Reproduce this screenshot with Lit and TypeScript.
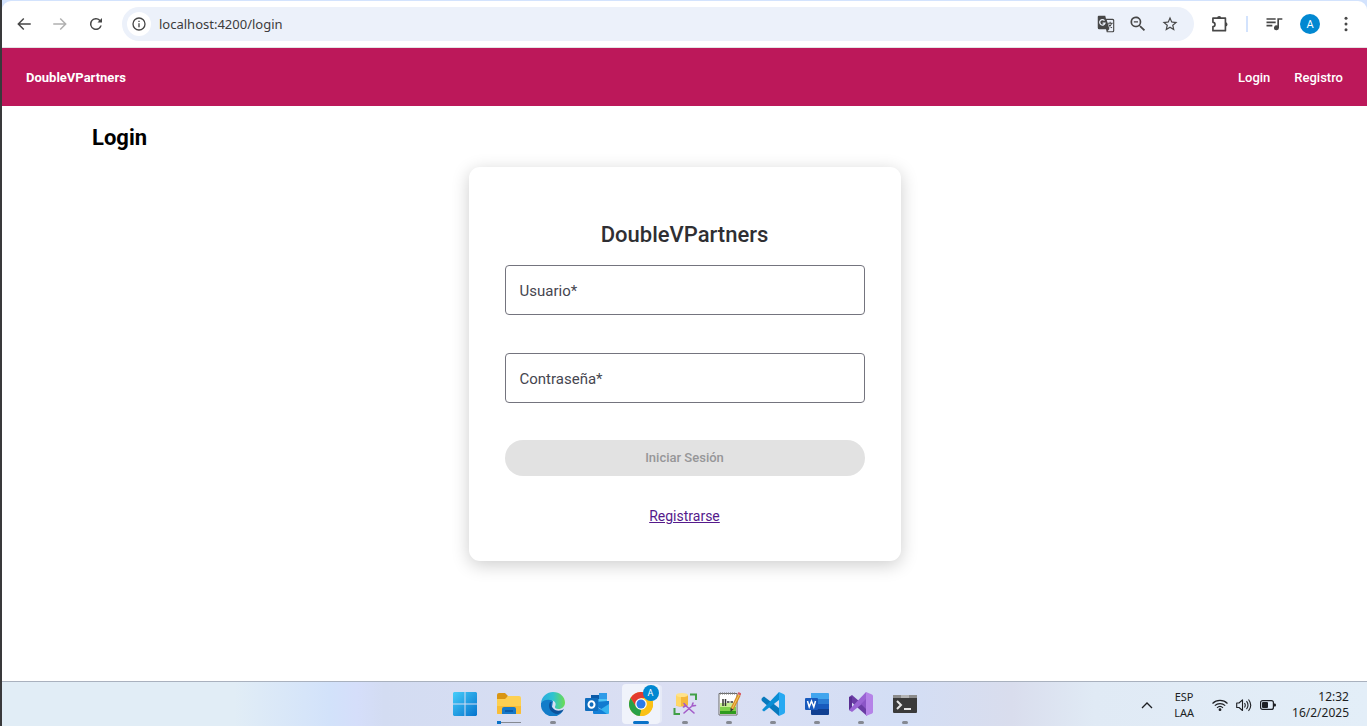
import { LitElement, html, css, svg } from "lit";
import { customElement, state } from "lit/decorators.js";

const icon = (size: number, content: unknown, box = 24) =>
  html`<svg class="icon" aria-hidden="true" width=${size} height=${size} viewBox="0 0 ${box} ${box}">${content}</svg>`;

const resets = css`
  :host, * { box-sizing: border-box; }
  button { border: 0; padding: 0; background: none; color: inherit; font: inherit; }
  svg { display: block; flex: none; }
`;

@customElement("browser-toolbar")
class BrowserToolbar extends LitElement {
  static styles = [resets, css`
    :host { display: block; background: #d3e3fd; padding-top: 1px; font-family: "Open Sans", "Noto Sans", sans-serif; color: #474747; }
    .bar { display: flex; align-items: center; height: 47px; background: #fff; border-bottom: 1px solid #e3e3e3; border-radius: 9px 9px 0 0; padding: 0 11px 0 12px; }
    .nav { display: flex; gap: 16px; padding-right: 16px; }
    .tool { display: grid; place-items: center; width: 20px; height: 24px; }
    .dim { color: #b0b0b0; }
    .omni { flex: 1; display: flex; align-items: center; height: 34px; border-radius: 17px; background: #ecf1fa; padding: 0 14px 0 5px; }
    .info { display: grid; place-items: center; width: 24px; height: 24px; border-radius: 50%; background: #fff; }
    .url { flex: 1; min-width: 0; border: 0; outline: 0; background: none; padding: 0 8px; font: 13px "Noto Sans", sans-serif; color: #3c3c3c; }
    .actions { display: flex; gap: 12px; }
    .right { display: flex; align-items: center; gap: 16px; padding-left: 16px; }
    .rule { width: 2px; height: 16px; background: #d3e3fd; }
    .avatar { display: grid; place-items: center; width: 20px; height: 20px; border-radius: 50%; background: #0288d1; color: #fff; font: 11px Roboto, sans-serif; }
  `];

  render() {
    return html`
      <div class="bar">
        <div class="nav">
          <button class="tool" aria-label="Atrás">${icon(18, svg`<path fill="currentColor" d="M21 11H6.8l5.600-5.600L11 4l-8 8 8 8 1.400-1.400L6.800 13H21z"/>`)}</button>
          <button class="tool dim" aria-label="Adelante">${icon(18, svg`<path fill="currentColor" d="M3 11h14.200l-5.600-5.600L13 4l8 8-8 8-1.400-1.400 5.600-5.600H3z"/>`)}</button>
          <button class="tool" aria-label="Recargar">${icon(18, svg`<path fill="currentColor" d="M17.650 6.350A8 8 0 1 0 19.730 14h-2.080A6 6 0 1 1 12 6c1.660 0 3.140.69 4.220 1.780L14 10h6V4z"/>`)}</button>
        </div>
        <div class="omni">
          <span class="info">${icon(16, svg`<path fill="currentColor" d="M11 7h2v2h-2zm0 4h2v6h-2zm1-9a10 10 0 1 0 0 20 10 10 0 0 0 0-20m0 18a8 8 0 1 1 0-16 8 8 0 0 1 0 16"/>`)}</span>
          <input class="url" aria-label="Dirección" value="localhost:4200/login" />
          <div class="actions">
            <button class="tool" aria-label="Traducir">${icon(18, svg`<path fill="currentColor" fill-rule="evenodd" d="M2 1h9l1 4h9a2 2 0 0 1 2 2v14a2 2 0 0 1-2 2h-8l-1-4H3a2 2 0 0 1-2-2V3a2 2 0 0 1 1-2m11 5.500 3.500 12L14 21.500h6.500a1 1 0 0 0 1-1v-13a1 1 0 0 0-1-1z"/><path fill="none" stroke="#ecf1fa" stroke-width="1.700" d="M10 7.500a3.600 3.600 0 1 0 .7 3.300H7.500"/><path fill="none" stroke="currentColor" stroke-width="1.400" d="M14 11h7m-3.500-2v2m2 0c-.6 2.500-2.500 4.500-4 5.500m0-4c1 2 2.500 3.500 4.500 4.500"/>`)}</button>
            <button class="tool" aria-label="Zoom">${icon(20, svg`<path fill="currentColor" d="M15.500 14h-.8l-.3-.3a6.500 6.500 0 1 0-.7.7l.3.300v.8l5 5 1.500-1.500zm-6 0a4.500 4.500 0 1 1 0-9 4.500 4.500 0 0 1 0 9M7 8.700h5v1.600H7z"/>`)}</button>
            <button class="tool" aria-label="Favoritos">${icon(18, svg`<path fill="currentColor" d="m22 9.240-7.190-.62L12 2 9.190 8.630 2 9.240l5.460 4.730L5.820 21 12 17.270 18.180 21l-1.630-7.030zM12 15.400l-3.760 2.270 1-4.280-3.320-2.880 4.380-.38L12 6.100l1.710 4.040 4.380.38-3.320 2.880 1 4.280z"/>`)}</button>
          </div>
        </div>
        <div class="right">
          <button class="tool" aria-label="Extensiones">${icon(20, svg`<path fill="none" stroke="currentColor" stroke-width="2" stroke-linejoin="round" d="M3.500 5h15v15h-15v-5a2.500 2.500 0 0 0 0-5z"/><path fill="currentColor" d="M8.500 5a2.500 2.500 0 0 1 5 0zM18.500 10a2.500 2.500 0 0 1 0 5z"/>`)}</button>
          <span class="rule"></span>
          <button class="tool" aria-label="Multimedia">${icon(20, svg`<path fill="currentColor" d="M3 5h11v2H3zm0 4h11v2H3zm0 4h7v2H3zm13-8h6v2h-4v9.500a3 3 0 1 1-2-2.800z"/>`)}</button>
          <button class="avatar" aria-label="Perfil">A</button>
          <button class="tool" aria-label="Menú">${icon(20, svg`<circle cx="12" cy="5" r="1.800" fill="currentColor"/><circle cx="12" cy="12" r="1.800" fill="currentColor"/><circle cx="12" cy="19" r="1.800" fill="currentColor"/>`)}</button>
        </div>
      </div>`;
  }
}

@customElement("login-page")
class LoginPage extends LitElement {
  @state() private user = "";
  @state() private pass = "";

  static styles = [resets, css`
    :host { display: block; font-family: Roboto, sans-serif; background: #fff; }
    .header { display: flex; align-items: center; justify-content: space-between; height: 58px; padding: 0 24px; background: #bc185a; color: #fff; font-size: 13px; }
    .brand { font-weight: 700; color: #fff; text-decoration: none; }
    .links { display: flex; gap: 24px; }
    .link { color: #fff; text-decoration: none; font-weight: 500; }
    .content { display: grid; gap: 15px; padding: 18px 90px; }
    .heading { margin: 0; font-size: 22px; line-height: 28px; font-weight: 700; color: #000; }
    .card { justify-self: center; width: 100%; max-width: 432px; padding: 54px 36px 35px; border-radius: 11px; background: #fff; box-shadow: 0 4px 18px rgba(0, 0, 0, 0.2); display: flex; flex-direction: column; }
    .title { margin: 0 0 16px; text-align: center; font-size: 22px; line-height: 28px; font-weight: 500; color: #2f2f33; }
    .fields { display: grid; gap: 38px; margin-bottom: 37px; }
    .field { display: grid; align-items: center; height: 50px; }
    .input, .label { grid-area: 1 / 1; }
    .input { width: 100%; height: 50px; border: 1px solid #74747e; border-radius: 4px; padding: 0 14px; background: none; font: 14px Roboto, sans-serif; color: #1b1b1f; }
    .label { padding: 2px 15px 0; font-size: 15px; line-height: 20px; color: #46464f; pointer-events: none; }
    .input:focus + .label, .filled { visibility: hidden; }
    .submit { height: 36px; padding-bottom: 2px; border-radius: 18px; background: #bc185a; color: #fff; font-size: 13px; font-weight: 500; }
    .submit:disabled { background: #e2e2e2; color: #969698; }
    .register { align-self: center; margin-top: 30px; font-size: 14px; line-height: 20px; color: #551a8b; }
  `];

  render() {
    return html`
      <header class="header">
        <a class="brand" href="#">DoubleVPartners</a>
        <nav class="links">
          <a class="link" href="#login">Login</a>
          <a class="link" href="#registro">Registro</a>
        </nav>
      </header>
      <main class="content">
        <h1 class="heading">Login</h1>
        <form class="card">
          <h2 class="title">DoubleVPartners</h2>
          <div class="fields">
            <div class="field">
              <input class="input" id="user" required autocomplete="off" @input=${(e: any) => (this.user = e.target.value)} />
              <label class="label ${this.user ? "filled" : ""}" for="user">Usuario*</label>
            </div>
            <div class="field">
              <input class="input" id="pass" type="password" required autocomplete="off" @input=${(e: any) => (this.pass = e.target.value)} />
              <label class="label ${this.pass ? "filled" : ""}" for="pass">Contraseña*</label>
            </div>
          </div>
          <button class="submit" ?disabled=${!this.user || !this.pass}>Iniciar Sesión</button>
          <a class="register" href="#registro">Registrarse</a>
        </form>
      </main>`;
  }
}

const apps = [
  { name: "Inicio", mark: "", art: svg`<defs><linearGradient id="w" x2="1" y2="1"><stop stop-color="#46cdfa"/><stop offset="1" stop-color="#0573cd"/></linearGradient></defs><path fill="url(#w)" d="M1 0h10.500v11.500H0V1zm11.500 0H23l1 1v10.500H12.500zM0 12.500h11.500V24H1l-1-1zm12.500 0H24V23l-1 1H12.500z"/>` },
  { name: "Explorador de archivos", mark: "long", art: svg`<path fill="#d99513" d="M0 3q0-2 2-2h6l3 3-2 4H0z"/><path fill="#fdd052" d="M0 7h8l3-3h11q2 0 2 2v15q0 1-1 1H1q-1 0-1-1z"/><path fill="#f9bd36" d="M0 14h24v7q0 1-1 1H1q-1 0-1-1z"/><path fill="#1679c9" d="M5 22v-5q0-2 2-2h10q2 0 2 2v5z"/><path fill="#0c5ca8" d="M8 18h8v2H8z"/>` },
  { name: "Microsoft Edge", mark: "dot", art: svg`<defs><linearGradient id="e" x2="1" y2="0"><stop stop-color="#2aa9e0"/><stop offset=".5" stop-color="#2fc3d0"/><stop offset="1" stop-color="#6bdc50"/></linearGradient></defs><path fill="#127cc9" d="M0 11C2 7 8 5 12 9l-1 6q4 6 11 4A12 12 0 0 1 0 11"/><path fill="#0c529b" d="M9 10c-3 5 1 12 8 12 3-1 5-3 6-5-3 2-8 2.500-11-.5-2-2-2.500-4.500-1-6.500z"/><path fill="url(#e)" d="M0 11C1 4 6 0 12 0c7 0 12 5 12 10.500 0 4-3 6.500-6.500 6.500-3 0-4-1.500-3.500-2.500 1.200-1.500 1-5-2.500-6C7 7 2 8 0 11"/>` },
  { name: "Outlook", mark: "", art: svg`<path fill="#0a5aa8" d="M6 3h8v9H6z"/><path fill="#2f9be8" d="M14 1h8v6h-8zM6 7h8v6H6z"/><path fill="#50c4f5" d="M14 7h8v7h-8z"/><path fill="#117bd0" d="M22 9h2v4l-6 5-8-4v-4z"/><path fill="#36b3f0" d="m24 12-14 9q1 1 2 1h11q1 0 1-1z"/><path fill="#1480d8" d="M8 12v9q0 1 1 1h13z"/><rect y="6" width="13" height="13" rx="1" fill="#0f6cbd"/><ellipse cx="6.500" cy="12.500" rx="3" ry="3.300" fill="none" stroke="#fff" stroke-width="2"/>` },
  { name: "Google Chrome", mark: "active", art: svg`<circle cx="12" cy="12" r="12" fill="#fbc116"/><path fill="#e33b2e" d="M1.600 6A12 12 0 0 1 22.400 6H12l-5 9z"/><path fill="#28a047" d="M1.600 6 7.200 15l5 3-1.500 6A12 12 0 0 1 1.600 6"/><path fill="#fbc116" d="M22.400 6A12 12 0 0 1 10.800 24l6.200-9L16 6z"/><circle cx="12" cy="12" r="5.800" fill="#fff"/><circle cx="12" cy="12" r="4.500" fill="#2b7bea"/>` },
  { name: "SQL Server", mark: "dot", art: svg`<path fill="#f4b83b" d="M3 3v10c0 2 12 2 12 0V3z"/><path fill="#ffd766" d="M3 3v10c0 1 4 1.500 5 1.500V4z"/><ellipse cx="9" cy="3" rx="6" ry="2" fill="#ffe28a"/><path fill="none" stroke="#41a047" stroke-width="2" d="M17 2.500h6V8M1.500 16v6H7"/><path fill="none" stroke="#a45cc9" stroke-width="1.600" stroke-linecap="round" d="m11 21 8-7m-7-1 9 8M11 11.500l2 2-2.500 1.500M20 11l-1 3 3.500-.5"/>` },
  { name: "Notepad++", mark: "dot", art: svg`<path fill="#fff" stroke="#6b6b6b" d="M2 1.500h18V23H2z"/><path fill="#c8ee94" d="M3 11h16v4H3z"/><path fill="#7fd04a" d="M3 15h16v4H3z"/><path fill="#2f9b1e" d="M3 19h16v3H3z"/><path stroke="#777" stroke-width="2" stroke-dasharray="1 1" d="M3 1.500h16"/><path fill="none" stroke="#333" stroke-width="1.500" d="M6 7v7m2.500-7v7M10 10h2.500m1 0H16"/><path stroke="#d78b25" stroke-width="3.500" d="m22 3-7 14"/><path stroke="#f6cf62" d="m22 3-7 14"/><path fill="#333" d="m13.500 16 3 1.300-3 2.700z"/><path fill="#d85b62" d="m20.500 2 1-2 3 1.500-1 2z"/>` },
  { name: "Visual Studio Code", mark: "dot", art: svg`<path fill="#0879bd" d="m1 6 2-1.500 15 11.500V24L1 9q-1-1.500 0-3"/><path fill="#0b8ed5" d="M1 18 18 0v8L3 19.500z"/><path fill="#27a9f2" d="m18 0 5 2.300q1 .5 1 1.700v16q0 1.200-1 1.700L18 24z"/>` },
  { name: "Word", mark: "dot", art: svg`<path fill="#41a5ee" d="M6 1h17q1 0 1 1v5H6z"/><path fill="#2b7cd3" d="M6 7h18v5H6z"/><path fill="#185abd" d="M6 12h18v5H6z"/><path fill="#103f91" d="M6 17h18v5q0 1-1 1H7q-1 0-1-1z"/><rect y="6" width="13" height="12" rx="1" fill="#185abd"/><path fill="none" stroke="#fff" stroke-width="1.500" d="m2.500 9 1.700 6 2.300-6 2.300 6 1.700-6"/>` },
  { name: "Visual Studio", mark: "dot", art: svg`<path fill="#6a3ca5" d="m0 5 3-2 15 13v8L0 8z"/><path fill="#5a2f92" d="M0 5h3v14l-3-1z"/><path fill="#9a64d4" d="m0 18 17-18 2 7L3 20z"/><path fill="#b583e8" d="m17 0 6 2.500q1 .5 1 1.500v16q0 1-1 1.500L17 24z"/><path fill="#8b55c7" d="M17 7v10l-5-5z"/>` },
  { name: "Terminal", mark: "dot", art: svg`<path fill="#8c8c8c" d="M0 3h24v4H0z"/><path fill="#b4b4b4" d="M8 3h8v3H8z"/><path fill="#3a3a3a" d="M0 6h24v14q0 1-1 1H1q-1 0-1-1z"/><path fill="none" stroke="#e6e6e6" stroke-width="2" d="m4 9 4 4-4 4m7 0h7"/>` },
];

@customElement("task-bar")
class TaskBar extends LitElement {
  static styles = [resets, css`
    :host { display: grid; grid-template-columns: 1fr auto 1fr; align-items: center; height: 45px; border-top: 1px solid #a9b1be; background: linear-gradient(90deg, #e1edf6 0%, #e1edf6 17%, #d2e2fa 24%, #d5defa 26%, #d3dcf2 28%, #dbdff3 50%, #d3def5 66%, #d9dded 74%, #e0eaf5 80%, #e3eef8 100%); font: 11px/16px "Noto Sans", sans-serif; color: #1d1f23; }
    .apps { grid-column: 2; display: flex; gap: 6px; }
    .app { position: relative; display: grid; justify-items: center; align-content: start; padding-top: 8px; width: 38px; height: 40px; border-radius: 4px; }
    .current { background: #f0f3fb; box-shadow: 3px 0 0 -1px #e6eaf7; }
    .mark { position: absolute; bottom: 0; width: 6px; height: 3px; border-radius: 2px; background: #858992; }
    .long { width: 24px; border-radius: 0; background: radial-gradient(circle at 2px 50%, #0a72c8 2px, transparent 2px), linear-gradient(transparent 1px, #858992 1px 2px, transparent 2px); }
    .wide { width: 16px; background: #0a72c8; }
    .badge { position: absolute; top: 1px; right: 1px; display: grid; place-items: center; width: 16px; height: 16px; border-radius: 50%; background: #0288d1; color: #fff; font: 9px Roboto, sans-serif; }
    .tray { display: flex; justify-content: flex-end; align-items: center; padding: 2px 18px 0 0; }
    .lang { text-align: center; padding: 0 18px 0 21px; }
    .status { display: flex; align-items: center; gap: 8px; padding-right: 16px; }
    .clock { text-align: right; font-size: 12px; }
  `];

  private mark(kind: string) {
    if (kind === "dot") return html`<span class="mark"></span>`;
    if (kind === "long") return html`<span class="mark long"></span>`;
    if (kind === "active") return html`<span class="mark wide"></span><span class="badge">A</span>`;
    return "";
  }

  render() {
    return html`
      <div class="apps">
        ${apps.map((a) => html`<button class="app ${a.mark === "active" ? "current" : ""}" aria-label=${a.name}>${icon(24, a.art)}${this.mark(a.mark)}</button>`)}
      </div>
      <div class="tray">
        <button aria-label="Iconos ocultos">${icon(12, svg`<path d="m1 9 5-5 5 5" fill="none" stroke="currentColor" stroke-width="1.300"/>`, 12)}</button>
        <div class="lang">ESP<br />LAA</div>
        <div class="status">
          ${icon(16, svg`<g fill="none" stroke="currentColor" stroke-width="1.100"><path d="M.5 6.500a10.500 10.500 0 0 1 15 0M2.800 8.700a7.500 7.500 0 0 1 10.400 0M5 10.800a4.400 4.400 0 0 1 6 0"/></g><circle cx="8" cy="12.700" r="1.400" fill="currentColor"/>`, 16)}
          ${icon(16, svg`<path fill="none" stroke="currentColor" stroke-width="1.100" stroke-linejoin="round" d="M.7 6v4.500H3l3.500 3V2.800L3 6zM8.500 6q1.500 2.200 0 4.500m2-6.300q3 4 0 8M12.500 2.500q4.500 5.700 0 11.400"/>`, 16)}
          ${icon(16, svg`<rect x=".6" y="3.600" width="12.800" height="8.800" rx="2" fill="none" stroke="currentColor" stroke-width="1.200"/><rect x="2" y="5" width="6" height="6" rx="1" fill="currentColor"/><path fill="currentColor" d="M14 6.500h1q1 0 1 1.500t-1 1.500h-1z"/>`, 16)}
        </div>
        <div class="clock">12:32<br />16/2/2025</div>
      </div>`;
  }
}

@customElement("app-root")
class AppRoot extends LitElement {
  static styles = css`
    :host { display: flex; flex-direction: column; box-sizing: border-box; min-height: 100vh; background: #fff; border-left: 2px solid #39393b; }
    .window { flex: 1; }
  `;

  render() {
    return html`
      <div class="window">
        <browser-toolbar></browser-toolbar>
        <login-page></login-page>
      </div>
      <task-bar></task-bar>`;
  }
}
